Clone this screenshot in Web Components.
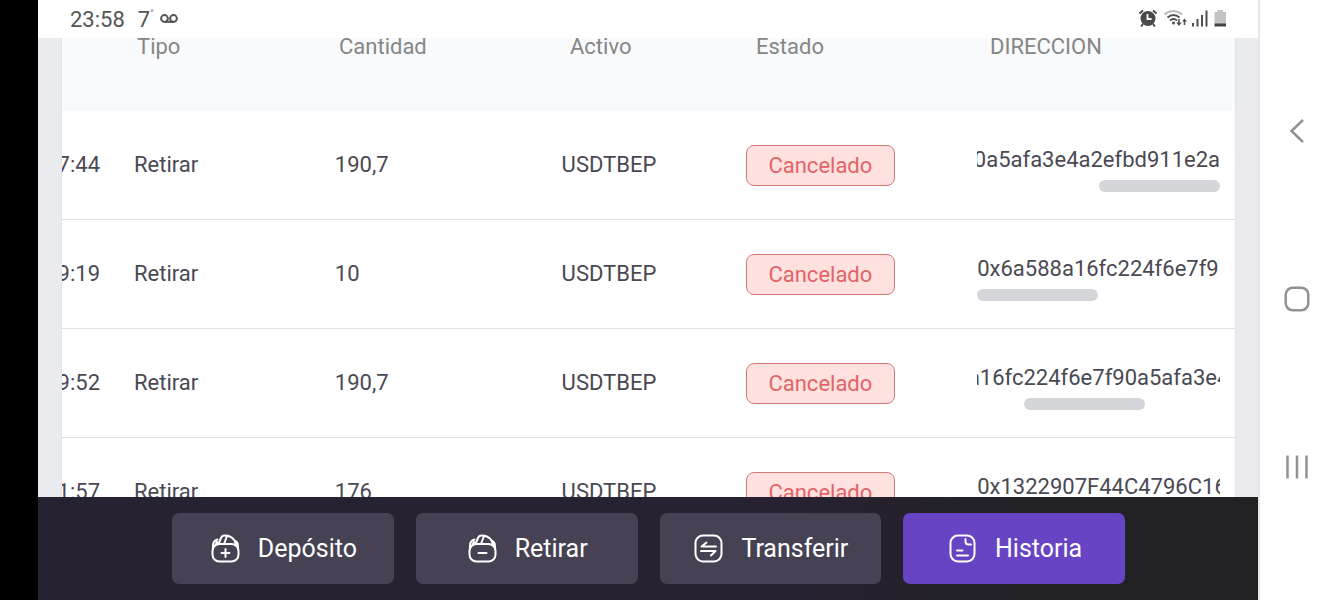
<!DOCTYPE html>
<html lang="es">
<head>
<meta charset="utf-8">
<meta name="viewport" content="width=device-width, initial-scale=1">
<title>Historia</title>
<style>
  html, body { height: 100%; margin: 0; }
  body { font-family: Roboto, "Noto Sans", sans-serif; background: #fff; overflow: hidden; }
</style>
</head>
<body>
<phone-frame>
  <status-bar slot="status"></status-bar>
  <history-table></history-table>
  <action-bar slot="actions">
    <action-button icon="deposit">Depósito</action-button>
    <action-button icon="withdraw">Retirar</action-button>
    <action-button icon="transfer">Transferir</action-button>
    <action-button icon="history" active>Historia</action-button>
  </action-bar>
  <system-nav slot="nav"></system-nav>
</phone-frame>

<script>
const define = (name, html) => customElements.define(name, class extends HTMLElement {
  connectedCallback() {
    if (this.shadowRoot) return;
    this.attachShadow({ mode: 'open' }).innerHTML = typeof html === 'function' ? html(this) : html;
  }
});

define('phone-frame', `
<style>
  :host { display: flex; height: 100vh; }
  .cutout { flex: none; width: 38px; background: #000; }
  .screen { flex: 1; min-width: 0; display: flex; flex-direction: column; }
  main { flex: 1; min-height: 0; overflow: hidden; padding: 0 22px 0 23px; background: #eaebef; }
</style>
<div class="cutout"></div>
<div class="screen">
  <slot name="status"></slot>
  <main><slot></slot></main>
  <slot name="actions"></slot>
</div>
<slot name="nav"></slot>`);

define('status-bar', `
<style>
  :host { flex: none; display: flex; align-items: center; justify-content: space-between; height: 38px;
    box-sizing: border-box; padding: 0 31px 0 32px; background: #fff; color: #555; font-size: 22px; }
  div { display: flex; align-items: center; }
  .left { gap: 13px; }
  .temp { gap: 6px; }
  .deg { display: flex; align-items: flex-start; }
  sup { font-size: 9px; line-height: 12px; }
  .right { gap: 5px; }
  svg { display: block; }
</style>
<div class="left">
  <span>23:58</span>
  <div class="temp">
    <span class="deg">7<sup>°</sup></span>
    <svg width="18" height="11" viewBox="0 0 18 11" fill="none" stroke="#555" stroke-width="2" aria-hidden="true"><circle cx="4.500" cy="4.500" r="3.400"/><circle cx="13.500" cy="4.500" r="3.400"/><path d="M4.500 7.900H13.500"/></svg>
  </div>
</div>
<div class="right">
  <svg width="20" height="20" viewBox="0 0 20 20" aria-hidden="true"><circle cx="10" cy="9.500" r="7.500" fill="#494949"/><path d="M1.500 4.500L5 1.500M18.500 4.500L15 1.500M5 15L3 17.500M15 15L17 17.500" stroke="#494949" stroke-width="2" fill="none"/><path d="M9.500 5V10H13.500" stroke="#fff" stroke-width="1.800" fill="none"/></svg>
  <svg width="24" height="20" viewBox="0 0 24 20" fill="none" stroke-width="2" aria-hidden="true"><path d="M1.500 5.500Q10 -1.500 19 5.500" stroke="#bbb"/><path d="M4.500 8.500Q10.500 3.500 16.500 8.500M7 11.500Q10.500 8.500 14 11.500" stroke="#505050"/><circle cx="10.500" cy="14" r="1.500" fill="#505050"/><path d="M16 10V15M21.500 16V11" stroke="#505050" stroke-width="1.600"/><path d="M13.300 13.500H18.700L16 17ZM19 12.500H24L21.500 9.500Z" fill="#505050"/></svg>
  <svg width="16" height="20" viewBox="0 0 16 20" stroke="#505050" stroke-width="2" aria-hidden="true"><path d="M1 17.500V14M5.500 17.500V10M10 17.500V6M14.500 17.500V1.500"/></svg>
  <svg width="14" height="20" viewBox="0 0 14 20" aria-hidden="true"><path d="M4.500 1H10V3H13V15H1.500V3H4.500Z" fill="#c3c3c3"/><path d="M1.500 14.500H13V17.500H1.500Z" fill="#444"/></svg>
</div>`);

const rows = [
  ['7:44', '190,7', '0a5afa3e4a2efbd911e2a', 'end'],
  ['9:19', '10', '0x6a588a16fc224f6e7f9', 'start'],
  ['9:52', '190,7', 'a16fc224f6e7f90a5afa3e4', 'middle'],
  ['1:57', '176', '0x1322907F44C4796C16', 'start']
];

define('history-table', `
<style>
  :host { display: block; background: #fff; border: solid #e4e4e6; border-width: 0 1px; }
  table, thead, tbody { display: block; }
  table { font-size: 22px; color: #4a4953; }
  tr { display: grid; align-items: center; }
  th, td { padding: 0; text-align: left; font-weight: 400; white-space: nowrap; min-width: 0; }
  thead tr { grid-template-columns: 75px 202fr 231fr 186fr 234fr 245fr; align-items: start;
    height: 73px; background: #f9fafc; color: #868686; line-height: 18px; }
  tbody tr { grid-template-columns: 72px 201fr 227fr 185fr 231fr 258fr; height: 108px;
    border-bottom: 1px solid #dedfe0; line-height: 26px; }
  td.time { display: flex; justify-content: flex-end; margin-right: 34px; overflow: hidden; }
  td:last-child { padding: 8px 15px 0 0; }
</style>
<table>
  <thead><tr><th></th><th>Tipo</th><th>Cantidad</th><th>Activo</th><th>Estado</th><th>DIRECCION</th></tr></thead>
  <tbody>${rows.map(([time, amount, address, at]) => `
    <tr><td class="time">${time}</td><td>Retirar</td><td>${amount}</td><td>USDTBEP</td>
    <td><status-badge>Cancelado</status-badge></td>
    <td><address-scroller at="${at}">${address}</address-scroller></td></tr>`).join('')}
  </tbody>
</table>`);

define('status-badge', `
<style>
  :host { display: block; width: fit-content; box-sizing: border-box; height: 41px; padding: 0 22px 0 21px; line-height: 39px;
    border: 1px solid #d27878; border-radius: 8px; background: #ffe1df; color: #e26467; }
</style><slot></slot>`);

define('address-scroller', `
<style>
  :host { display: flex; flex-direction: column; gap: 7px; --at: flex-start; }
  :host([at="middle"]) { --at: center; }
  :host([at="end"]) { --at: flex-end; }
  .text, .track { display: flex; justify-content: var(--at); overflow: hidden; }
  .text span { flex: none; }
  .thumb { flex: none; width: 121px; height: 12px; border-radius: 6px; background: #d5d6d9; }
  :host([at="middle"]) .track { padding-right: 28px; }
</style>
<div class="text"><span><slot></slot></span></div>
<div class="track"><div class="thumb"></div></div>`);

define('action-bar', `
<style>
  :host { flex: none; display: grid; grid-template-columns: repeat(4, 1fr); gap: 22px;
    padding: 16px 133px 16px 134px; background: linear-gradient(90deg, #272232 60%, #212023 85%); }
</style><slot></slot>`);

const bag = '<rect x="1.500" y="10" width="26" height="17.500" rx="7"/><path d="M2 15V11.500C2 8.500 3.500 6.500 6.500 5.500M27 15V12C27 9 25.500 7.500 23.500 6.500M4.500 11L6 8M7.500 10L10 4C10.700 2.200 11.500 1.500 13.500 1.500C17.500 1.500 21.500 3.500 23.500 6.500L25 11M13 10L15.800 2.500"/>';
const icons = {
  deposit: bag + '<path d="M14.500 15V23M10.500 19H18.500"/>',
  withdraw: bag + '<path d="M10.500 19H18.500"/>',
  transfer: '<rect x="1.500" y="1.500" width="26" height="26" rx="7.500"/><path d="M22 12.500H7.500L12.500 8.500M7 17H21.500L17 21.500"/>',
  history: '<rect x="2.500" y="1.500" width="24" height="26" rx="7.500"/><path d="M17.500 5V7.500C17.500 9.500 18.500 10.500 20.500 10.500H23M9 16.500H14.500M9 21.500H20"/>'
};
define('action-button', el => `
<style>
  :host { display: block; }
  button { width: 100%; height: 71px; padding: 0; border: 0; border-radius: 7px; background: #464254; color: #fff;
    font: inherit; font-size: 25px; line-height: 30px; display: flex; align-items: center; justify-content: center; gap: 18px; padding-left: 2px; }
  :host([active]) button { background: #6744c4; }
</style>
<button type="button"><svg width="29" height="29" viewBox="0 0 29 29" fill="none" stroke="#fff" stroke-width="2" stroke-linecap="round" stroke-linejoin="round" aria-hidden="true">${icons[el.getAttribute('icon')]}</svg><span><slot></slot></span></button>`);

define('system-nav', `
<style>
  :host { flex: none; display: flex; flex-direction: column; box-sizing: border-box; width: 75px; padding: 47px 0 49px;
    border-left: 2px solid #e6e6e6; background: #fff; }
  button { flex: 1; padding: 0; border: 0; background: none; display: grid; place-items: center; }
  svg { display: block; fill: none; stroke: #929292; stroke-width: 2.500; }
</style>
<button type="button" aria-label="Atrás"><svg width="26" height="26" viewBox="0 0 26 26"><path d="M19 2L7.500 13L19 24"/></svg></button>
<button type="button" aria-label="Inicio"><svg width="26" height="26" viewBox="0 0 26 26"><rect x="1.700" y="1.700" width="22.600" height="22.600" rx="7"/></svg></button>
<button type="button" aria-label="Recientes"><svg width="26" height="26" viewBox="0 0 26 26"><path d="M3.500 1.500V24.500M13 1.500V24.500M22.500 1.500V24.500"/></svg></button>`);
</script>
</body>
</html>
